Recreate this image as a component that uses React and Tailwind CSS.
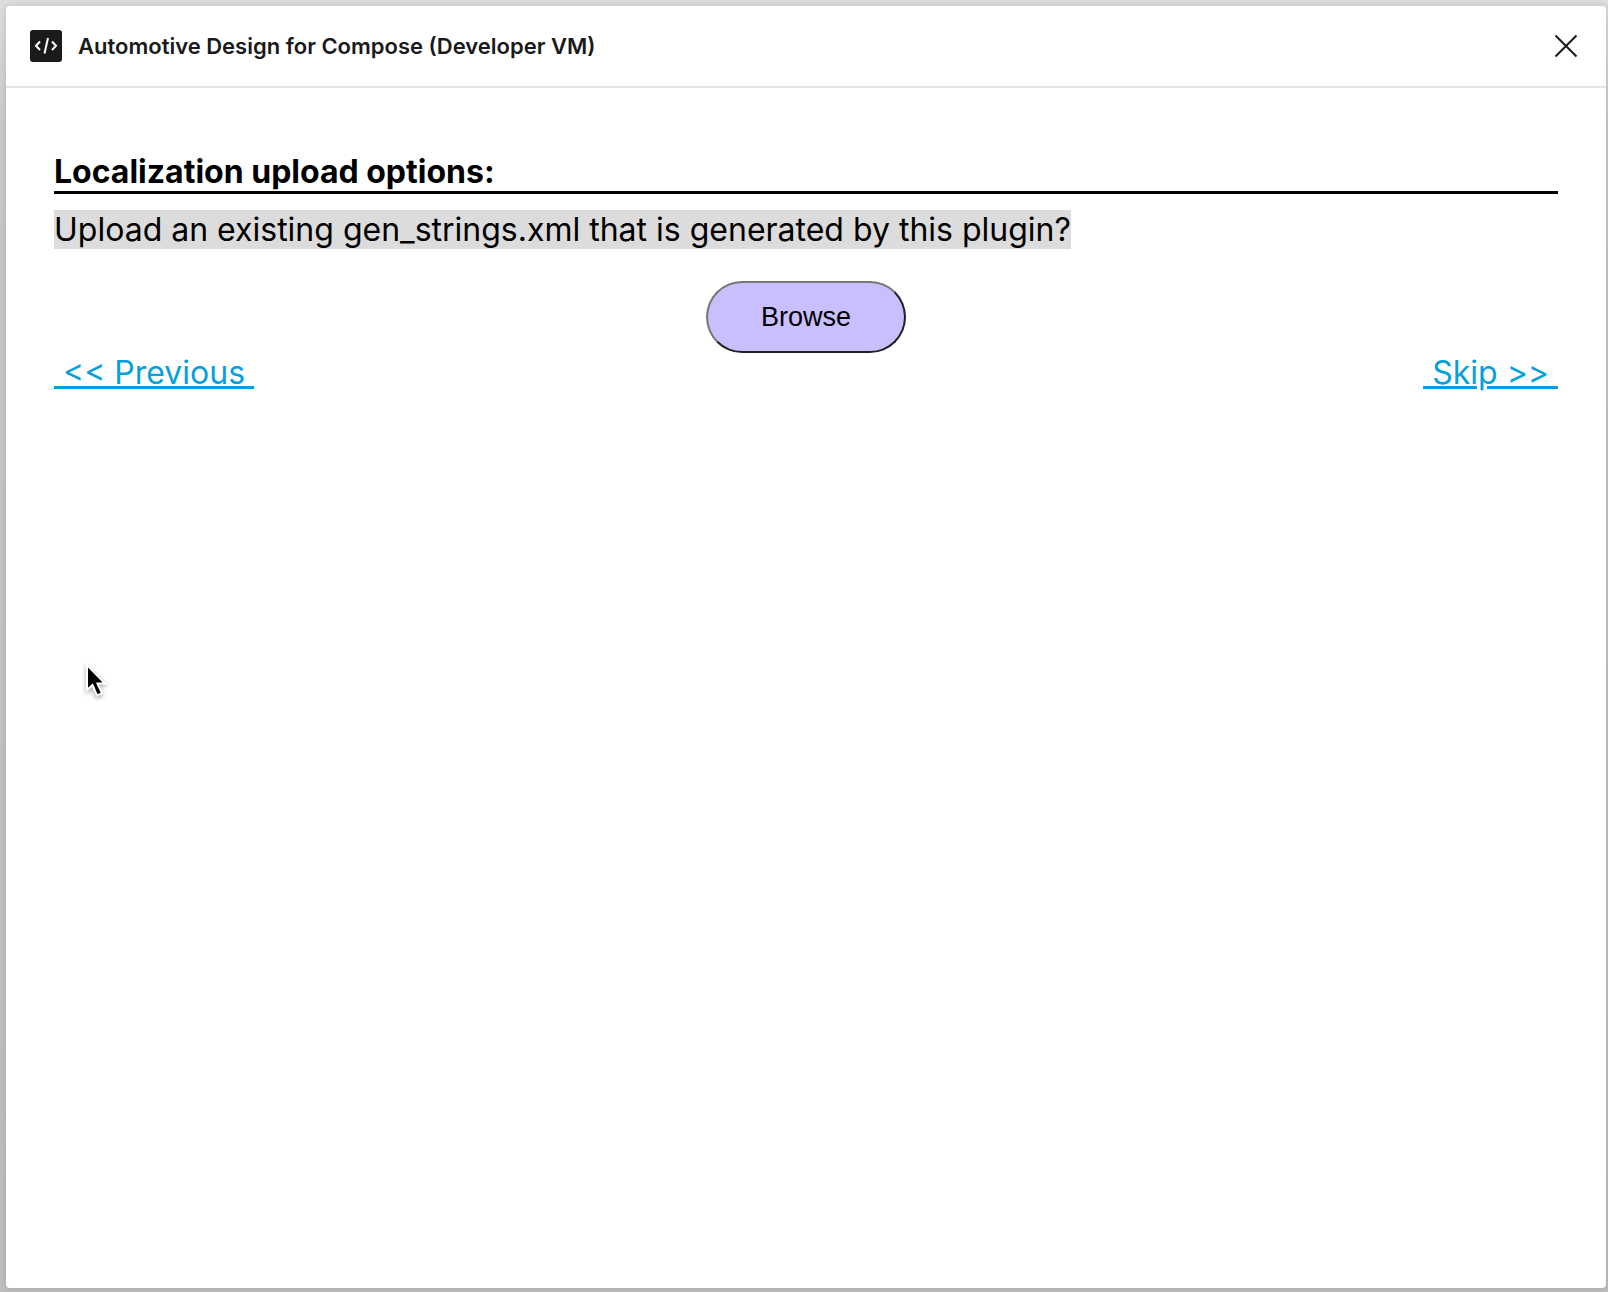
function CodeIcon() {
  return (
    <svg className="size-8 shrink-0" viewBox="0 0 32 32" fill="none" aria-hidden="true">
      <rect width="32" height="32" rx="3" fill="#1a1a1a" />
      <path d="M10 11.500 6 15.750l4 4.250M22 11.500l4 4.250-4 4.250" stroke="#fff" strokeWidth="2" />
      <path d="M18 8l-3.500 15.500" stroke="#fff" strokeWidth="2" />
    </svg>
  );
}

function Header() {
  return (
    <header className="flex items-center gap-4 border-b-2 border-[#e5e5e5] px-6 py-6">
      <CodeIcon />
      <h1 className="flex-1 text-[22px] leading-8 font-semibold text-[#1a1a1a]">
        Automotive Design for Compose (Developer VM)
      </h1>
      <button type="button" aria-label="Close" className="flex size-8 items-center justify-center">
        <svg className="size-8" viewBox="0 0 32 32" fill="none" aria-hidden="true">
          <path d="M5.500 5.500l21 21M26.500 5.500l-21 21" stroke="#1a1a1a" strokeWidth="2" />
        </svg>
      </button>
    </header>
  );
}

function Pointer() {
  return (
    <svg className="pointer-events-none absolute top-[662px] left-[84px] h-10 w-7 drop-shadow-[0_2px_2px_rgba(0,0,0,0.35)]" viewBox="0 0 28 40" aria-hidden="true">
      <path d="M3 3v25l5.500-5 4.500 10.500 5-2.200-4.500-9.800H21Z" fill="#000" stroke="#fff" strokeWidth="2" />
    </svg>
  );
}

export default function App() {
  return (
    <div className="relative flex min-h-screen bg-linear-to-b from-[#dedede] from-0% via-[#c9c9c9] via-10% to-[#bdbdbd] pt-1.5 pr-0.5 pb-1 pl-1.5 font-['Inter',sans-serif] text-black">
      <div className="flex-1 rounded bg-white shadow-[0_0_6px_rgba(0,0,0,0.15)]">
        <Header />
        <main className="px-12 pt-16">
          <h2 className="border-b-[3px] border-black text-[32px] leading-[39px] font-bold">
            Localization upload options:
          </h2>
          <p className="mt-4 text-[32px] leading-[39px]">
            <span className="bg-[#dcdcdc]">
              Upload an existing gen_strings.xml that is generated by this plugin?
            </span>
          </p>
          <div className="mt-8 flex justify-center">
            <button
              type="button"
              className="h-18 w-50 rounded-[36px] border-2 border-t-[#767676] border-r-[#212121] border-b-[#212121] border-l-[#767676] bg-[#c9bfff] font-['Liberation_Sans',sans-serif] text-[27px] leading-8"
            >
              Browse
            </button>
          </div>
          <nav className="flex justify-between text-[32px] leading-[39px] text-[#069fde] underline">
            <a href="#previous">{"\u00a0<< Previous\u00a0"}</a>
            <a href="#skip">{"\u00a0Skip >>\u00a0"}</a>
          </nav>
        </main>
      </div>
      <Pointer />
    </div>
  );
}
